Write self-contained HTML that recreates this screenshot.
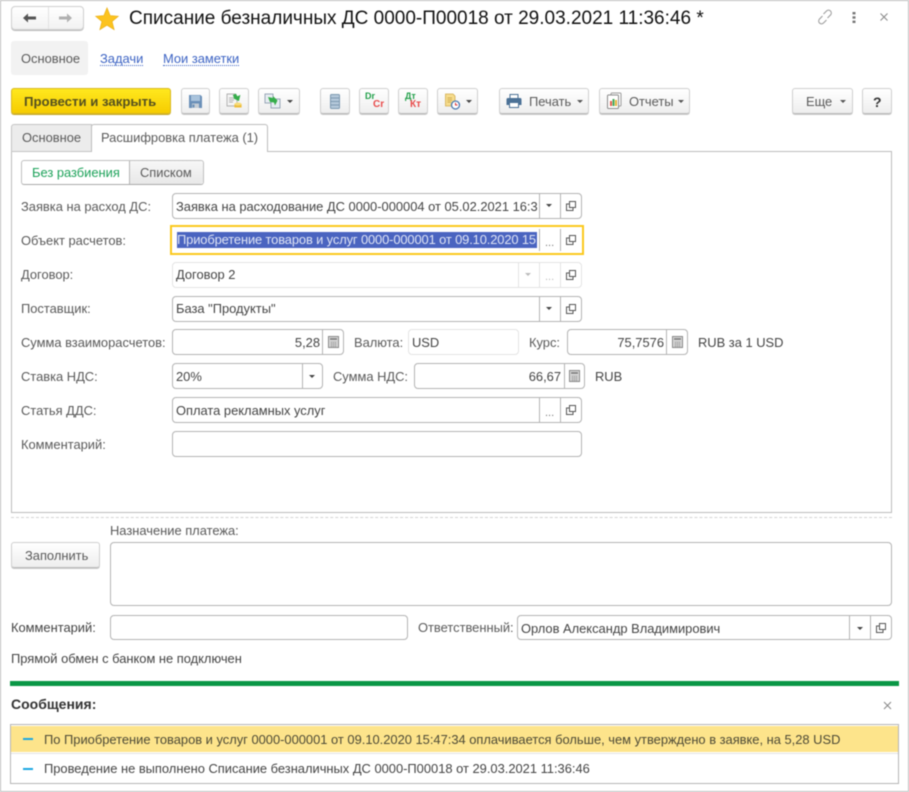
<!DOCTYPE html>
<html lang="ru"><head><meta charset="utf-8"><title>Списание безналичных ДС</title>
<style>
html,body{margin:0;padding:0;background:#fff}
#p{position:relative;width:909px;height:792px;overflow:hidden;background:#fff;font:13px "Liberation Sans",Arial,sans-serif;color:#4a4a4a;filter:blur(.45px)}
#p div,#p svg{position:absolute;box-sizing:border-box}
.t{white-space:nowrap;line-height:16px;height:16px;font-size:12.9px;color:#5a5a5a;transform:translateY(1px)}
.v{white-space:nowrap;line-height:16px;height:16px;font-size:12.9px;color:#444;overflow:hidden;transform:translateY(1px)}
.f{border:1px solid #b3b3b3;border-radius:4px;background:#fff}
.l{border-color:#e4e4e4}
.d{width:1px;background:#b3b3b3}
.b{border:1px solid #cfcfcf;border-bottom-color:#bbb;box-shadow:0 1px 0 #c9c9c9;border-radius:3px;background:linear-gradient(#fff,#eee);top:88px;height:26px}
.c{width:0;height:0;border-left:3px solid transparent;border-right:3px solid transparent;border-top:3px solid #444}
.bt{white-space:nowrap;line-height:16px;height:16px;font-size:12.9px;color:#5a5a5a;top:94px}
</style></head><body><div id="p">
<!-- window frame -->
<div style="left:0;top:0;width:909px;height:792px;border:1px solid #bdbdbd"></div>

<!-- nav -->
<div style="left:11px;top:6px;width:73px;height:24px;border:1px solid #cfcfcf;box-shadow:0 1px 0 #bbb;border-radius:4px;background:linear-gradient(#fff,#f2f2f2)"></div>
<div class="d" style="left:48px;top:7px;height:22px;background:#e2e2e2"></div>
<svg style="left:22px;top:12px" width="16" height="12" viewBox="0 0 16 12"><path d="M1 6L6 1.500V4.500H14V7.500H6V10.500Z" fill="#555"/></svg>
<svg style="left:57px;top:12px" width="16" height="12" viewBox="0 0 16 12"><path d="M15 6L10 1.500V4.500H2V7.500H10V10.500Z" fill="#b0b0b0"/></svg>
<svg style="left:95px;top:7px" width="24" height="24" viewBox="0 0 24 24"><path d="M12 .8L15.200 8.600 23.400 9.200 17.100 14.500 19.200 22.700 12 18.200 4.800 22.700 6.900 14.500.6 9.200 8.800 8.600Z" fill="#fcc31e" stroke="#e9ad12" stroke-width=".6"/></svg>
<div class="v" style="left:129px;top:7px;height:22px;line-height:22px;font-size:19px;color:#111;overflow:visible">Списание безналичных ДС 0000-П00018 от 29.03.2021 11:36:46 *</div>
<svg style="left:816px;top:8px" width="18" height="18" viewBox="0 0 18 18" fill="none" stroke="#999" stroke-width="1"><path d="M7.500 6L10.500 3a2.500 2.500 0 0 1 4 4L11.500 10"/><path d="M10.500 12L7.500 15a2.500 2.500 0 0 1-4-4L6.500 8"/></svg>
<svg style="left:852px;top:11px" width="4" height="13" viewBox="0 0 4 13" fill="#777"><rect x=".5" y="1" width="3" height="2.400"/><rect x=".5" y="5.300" width="3" height="2.400"/><rect x=".5" y="9.600" width="3" height="2.400"/></svg>
<svg style="left:879px;top:12px" width="10" height="10" viewBox="0 0 10 10" stroke="#888" stroke-width="1"><path d="M1.500 1.500L8.500 8.500M8.500 1.500L1.500 8.500"/></svg>

<!-- page tabs -->
<div style="left:11px;top:41px;width:77px;height:34px;background:#f2f2f2;border-radius:3px"></div>
<div class="t" style="left:21px;top:50px">Основное</div>
<div class="t" style="left:100px;top:50px;color:#3d64c4;border-bottom:1px dotted #3d64c4;height:15px">Задачи</div>
<div class="t" style="left:163px;top:50px;color:#3d64c4;border-bottom:1px dotted #3d64c4;height:15px">Мои заметки</div>

<!-- toolbar -->
<div style="left:11px;top:88px;width:160px;height:26px;border:1px solid #d8b820;box-shadow:0 1px 0 #c2a528;border-radius:3px;background:linear-gradient(#ffe81e,#f6cc00)"></div>
<div class="bt" style="left:24px;font-weight:bold;font-size:13.2px;color:#55501f">Провести и закрыть</div>
<div class="b" style="left:181px;width:29px"></div>
<svg style="left:188px;top:94px" width="15" height="15" viewBox="0 0 15 15"><path d="M1 1H12.500L14 2.500V14H1Z" fill="#6b90b8"/><rect x="3" y="1.500" width="9" height="5.500" fill="#a9c3dc"/><rect x="4" y="9.500" width="7" height="4.500" fill="#c5cdd5"/><rect x="4.500" y="10.500" width="2" height="3" fill="#6b90b8"/></svg>
<div class="b" style="left:219px;width:30px"></div>
<svg style="left:226px;top:92px" width="17" height="18" viewBox="0 0 17 18"><path d="M1 2H9L11 4V14H1Z" fill="#f4f4f4" stroke="#999" stroke-width=".7"/><path d="M3 6H8M3 8H8M3 10H7" stroke="#999" stroke-width=".8"/><ellipse cx="12" cy="14" rx="3.600" ry="1.500" fill="#eebd3a"/><rect x="8.400" y="12" width="7.200" height="3.500" fill="#eebd3a"/><ellipse cx="12" cy="12" rx="3.600" ry="1.500" fill="#f7dc79"/><path d="M8 1.500H11.500V4.500H15L11 9.500 7 4.500H8Z" fill="#35ad4a" transform="rotate(-25 11 5)"/></svg>
<div class="b" style="left:258px;width:42px"></div>
<svg style="left:264px;top:93px" width="17" height="16" viewBox="0 0 17 16"><rect x="1" y="1" width="8" height="9" fill="#e8edf2" stroke="#8495a8" stroke-width=".8"/><rect x="7" y="6" width="9" height="9" fill="#e8edf2" stroke="#8495a8" stroke-width=".8"/><path d="M4 4L9 5V3L13.500 7.500 11 12.500 10 9.500 6 9Z" fill="#35ad4a"/></svg>
<div class="c" style="left:287px;top:100px"></div>
<div class="b" style="left:320px;width:30px"></div>
<svg style="left:330px;top:94px" width="10" height="15" viewBox="0 0 10 15"><rect x=".5" y=".5" width="9" height="14" rx="1" fill="#b4c8d9" stroke="#7d99b1"/><path d="M.5 4H9.500M.5 7.500H9.500M.5 11H9.500" stroke="#7d99b1"/></svg>
<div class="b" style="left:359px;width:30px"></div>
<div style="left:365px;top:91px;font:bold 9px/10px 'Liberation Sans',sans-serif;color:#22a04a">Dr</div>
<div style="left:373px;top:100px;font:bold 10px/10px 'Liberation Sans',sans-serif;color:#e84b4b">Cr</div>
<div class="b" style="left:398px;width:30px"></div>
<div style="left:405px;top:91px;font:bold 9px/10px 'Liberation Sans',sans-serif;color:#22a04a">Дт</div>
<div style="left:410px;top:100px;font:bold 10px/10px 'Liberation Sans',sans-serif;color:#e84b4b">Кт</div>
<div class="b" style="left:437px;width:41px"></div>
<svg style="left:444px;top:93px" width="17" height="17" viewBox="0 0 17 17"><path d="M1.500 1H9L11 3V13H1.500Z" fill="#f6dc8d" stroke="#d2ad4f" stroke-width=".8"/><path d="M3.500 5H8M3.500 7H8M3.500 9H7" stroke="#c39a3a" stroke-width=".8"/><circle cx="11.500" cy="12" r="4" fill="#fff" stroke="#4c7ab0" stroke-width="1.300"/><path d="M11.500 9.800V12H13.500" stroke="#d33" stroke-width="1" fill="none"/></svg>
<div class="c" style="left:466px;top:100px"></div>
<div class="b" style="left:499px;width:90px"></div>
<svg style="left:506px;top:94px" width="16" height="14" viewBox="0 0 16 14"><rect x="4" y=".5" width="8" height="4" fill="#fff" stroke="#4b7196"/><path d="M.5 5.500Q.5 4 2 4H14Q15.500 4 15.500 5.500V11H.5Z" fill="#4b7196"/><rect x="3.500" y="8.500" width="9" height="5" fill="#fff" stroke="#4b7196"/></svg>
<div class="bt" style="left:529px">Печать</div>
<div class="c" style="left:577px;top:100px;border-top-color:#555"></div>
<div class="b" style="left:599px;width:91px"></div>
<svg style="left:606px;top:92px" width="17" height="18" viewBox="0 0 17 18"><rect x="5" y="1" width="10" height="13" rx="1" fill="#fff" stroke="#9a9a9a"/><rect x="1.500" y="3" width="11" height="13.500" rx="1" fill="#fff" stroke="#8a8a8a"/><rect x="4" y="9" width="2" height="5" fill="#e25b4b"/><rect x="6.500" y="7" width="2" height="7" fill="#42a85a"/><rect x="9" y="8" width="2" height="6" fill="#e4b43a"/></svg>
<div class="bt" style="left:629px">Отчеты</div>
<div class="c" style="left:678px;top:100px;border-top-color:#555"></div>
<div class="b" style="left:792px;width:61px"></div>
<div class="bt" style="left:806px">Еще</div>
<div class="c" style="left:840px;top:100px;border-top-color:#555"></div>
<div class="b" style="left:862px;width:30px"></div>
<div class="bt" style="left:873px;font-weight:bold;font-size:14px;color:#333">?</div>

<!-- tabs and panel -->
<div style="left:11px;top:151px;width:881px;height:362px;border:1px solid #bcbcbc;background:#fff"></div>
<div style="left:11px;top:124px;width:81px;height:28px;border:1px solid #c4c4c4;background:#ececec;border-radius:3px 0 0 0"></div>
<div class="t" style="left:22px;top:129px">Основное</div>
<div style="left:91px;top:124px;width:177px;height:28px;border:1px solid #bcbcbc;border-bottom:0;background:#fff;border-radius:3px 3px 0 0"></div>
<div class="t" style="left:101px;top:129px">Расшифровка платежа (1)</div>

<div style="left:21px;top:160px;width:183px;height:25px;border:1px solid #c0c0c0;border-bottom-color:#aaa;border-radius:3px;background:#fff"></div>
<div style="left:129px;top:161px;width:74px;height:23px;background:linear-gradient(#f7f7f7,#e8e8e8);border-left:1px solid #b5b5b5;border-radius:0 3px 3px 0"></div>
<div class="t" style="left:32px;top:164px;color:#1da25a">Без разбиения</div>
<div class="t" style="left:140px;top:164px">Списком</div>

<!-- rows -->
<div class="t" style="left:21px;top:198px">Заявка на расход ДС:</div>
<div class="f" style="left:172px;top:193px;width:410px;height:26px"></div>
<div class="d" style="left:539px;top:194px;height:24px"></div><div class="d" style="left:560px;top:194px;height:24px"></div>
<div class="v" style="left:176px;top:198px;width:362px">Заявка на расходование ДС 0000-000004 от 05.02.2021 16:39:11</div>
<div class="c" style="left:546px;top:204px"></div>

<div class="t" style="left:21px;top:232px">Объект расчетов:</div>
<div style="left:170px;top:225px;width:414px;height:30px;border:2px solid #fbc91c;background:#fff"></div>
<div class="d" style="left:539px;top:229px;height:22px"></div><div class="d" style="left:560px;top:229px;height:22px"></div>
<div class="v" style="left:177px;top:231px;width:360px;background:#4a64c0;color:#dfe4f5;letter-spacing:-.12px">Приобретение товаров и услуг 0000-000001 от 09.10.2020 15:47:34</div>
<div class="t" style="left:545px;top:234px;color:#777;font-size:11px">...</div>

<div class="t" style="left:21px;top:266px">Договор:</div>
<div class="f l" style="left:172px;top:262px;width:410px;height:26px"></div>
<div class="d" style="left:518px;top:263px;height:24px;background:#e4e4e4"></div><div class="d" style="left:539px;top:263px;height:24px;background:#e4e4e4"></div><div class="d" style="left:560px;top:263px;height:24px;background:#e4e4e4"></div>
<div class="v" style="left:176px;top:266px">Договор 2</div>
<div class="c" style="left:525px;top:273px;border-top-color:#bbb"></div>
<div class="t" style="left:545px;top:268px;color:#bbb;font-size:11px">...</div>

<div class="t" style="left:21px;top:300px">Поставщик:</div>
<div class="f" style="left:172px;top:296px;width:410px;height:26px"></div>
<div class="d" style="left:539px;top:297px;height:24px"></div><div class="d" style="left:560px;top:297px;height:24px"></div>
<div class="v" style="left:176px;top:300px">База "Продукты"</div>
<div class="c" style="left:546px;top:307px"></div>

<div class="t" style="left:21px;top:334px">Сумма взаиморасчетов:</div>
<div class="f" style="left:172px;top:329px;width:172px;height:26px"></div>
<div class="d" style="left:322px;top:330px;height:24px"></div>
<div class="v" style="right:589px;top:334px">5,28</div>
<div class="t" style="left:354px;top:334px">Валюта:</div>
<div class="f l" style="left:408px;top:329px;width:111px;height:26px"></div>
<div class="v" style="left:412px;top:334px">USD</div>
<div class="t" style="left:529px;top:334px">Курс:</div>
<div class="f" style="left:567px;top:329px;width:121px;height:26px"></div>
<div class="d" style="left:666px;top:330px;height:24px"></div>
<div class="v" style="right:245px;top:334px">75,7576</div>
<div class="v" style="left:698px;top:334px">RUB за 1 USD</div>

<div class="t" style="left:21px;top:368px">Ставка НДС:</div>
<div class="f" style="left:172px;top:363px;width:151px;height:26px"></div>
<div class="d" style="left:302px;top:364px;height:24px"></div>
<div class="v" style="left:176px;top:368px">20%</div>
<div class="c" style="left:309px;top:375px"></div>
<div class="t" style="left:333px;top:368px">Сумма НДС:</div>
<div class="f" style="left:414px;top:363px;width:171px;height:26px"></div>
<div class="d" style="left:564px;top:364px;height:24px"></div>
<div class="v" style="right:348px;top:368px">66,67</div>
<div class="v" style="left:595px;top:368px">RUB</div>

<div class="t" style="left:21px;top:402px">Статья ДДС:</div>
<div class="f" style="left:172px;top:397px;width:410px;height:26px"></div>
<div class="d" style="left:539px;top:398px;height:24px"></div><div class="d" style="left:560px;top:398px;height:24px"></div>
<div class="v" style="left:176px;top:402px">Оплата рекламных услуг</div>
<div class="t" style="left:545px;top:404px;color:#777;font-size:11px">...</div>

<div class="t" style="left:21px;top:436px">Комментарий:</div>
<div class="f" style="left:172px;top:431px;width:410px;height:26px"></div>

<!-- open icons -->
<svg style="left:566px;top:201px" width="10" height="10" viewBox="0 0 10 10" fill="none" stroke="#555"><rect x="3.500" y=".5" width="6" height="6" fill="#fff"/><path d="M3.500 3H.5V9.500H7V6.500"/></svg>
<svg style="left:566px;top:235px" width="10" height="10" viewBox="0 0 10 10" fill="none" stroke="#555"><rect x="3.500" y=".5" width="6" height="6" fill="#fff"/><path d="M3.500 3H.5V9.500H7V6.500"/></svg>
<svg style="left:566px;top:270px" width="10" height="10" viewBox="0 0 10 10" fill="none" stroke="#555"><rect x="3.500" y=".5" width="6" height="6" fill="#fff"/><path d="M3.500 3H.5V9.500H7V6.500"/></svg>
<svg style="left:566px;top:304px" width="10" height="10" viewBox="0 0 10 10" fill="none" stroke="#555"><rect x="3.500" y=".5" width="6" height="6" fill="#fff"/><path d="M3.500 3H.5V9.500H7V6.500"/></svg>
<svg style="left:566px;top:405px" width="10" height="10" viewBox="0 0 10 10" fill="none" stroke="#555"><rect x="3.500" y=".5" width="6" height="6" fill="#fff"/><path d="M3.500 3H.5V9.500H7V6.500"/></svg>
<!-- calc icons -->
<svg style="left:328px;top:336px" width="11" height="12" viewBox="0 0 11 12"><rect x=".5" y=".5" width="10" height="11" fill="#ddd" stroke="#888"/><rect x="2" y="2" width="7" height="2" fill="#888"/><path d="M2 6H9M2 8H9M2 10H9M3.500 5.500V11M5.500 5.500V11M7.500 5.500V11" stroke="#999" stroke-width=".6"/></svg>
<svg style="left:672px;top:336px" width="11" height="12" viewBox="0 0 11 12"><rect x=".5" y=".5" width="10" height="11" fill="#ddd" stroke="#888"/><rect x="2" y="2" width="7" height="2" fill="#888"/><path d="M2 6H9M2 8H9M2 10H9M3.500 5.500V11M5.500 5.500V11M7.500 5.500V11" stroke="#999" stroke-width=".6"/></svg>
<svg style="left:569px;top:370px" width="11" height="12" viewBox="0 0 11 12"><rect x=".5" y=".5" width="10" height="11" fill="#ddd" stroke="#888"/><rect x="2" y="2" width="7" height="2" fill="#888"/><path d="M2 6H9M2 8H9M2 10H9M3.500 5.500V11M5.500 5.500V11M7.500 5.500V11" stroke="#999" stroke-width=".6"/></svg>

<!-- bottom form -->
<div style="left:11px;top:517px;width:881px;height:1px;border-top:1px dashed #d4d4d4"></div>
<div class="t" style="left:110px;top:522px">Назначение платежа:</div>
<div class="b" style="left:11px;top:542px;width:89px;height:26px"></div>
<div class="t" style="left:25px;top:547px">Заполнить</div>
<div class="f" style="left:110px;top:542px;width:782px;height:64px"></div>
<div class="t" style="left:11px;top:619px;color:#444">Комментарий:</div>
<div class="f" style="left:110px;top:615px;width:298px;height:25px"></div>
<div class="t" style="left:418px;top:619px">Ответственный:</div>
<div class="f" style="left:517px;top:615px;width:375px;height:25px"></div>
<div class="d" style="left:849px;top:616px;height:23px"></div><div class="d" style="left:870px;top:616px;height:23px"></div>
<div class="v" style="left:521px;top:620px">Орлов Александр Владимирович</div>
<div class="c" style="left:857px;top:627px"></div>
<svg style="left:876px;top:623px" width="10" height="10" viewBox="0 0 10 10" fill="none" stroke="#555"><rect x="3.500" y=".5" width="6" height="6" fill="#fff"/><path d="M3.500 3H.5V9.500H7V6.500"/></svg>
<div class="t" style="left:11px;top:650px;color:#444">Прямой обмен с банком не подключен</div>

<!-- messages -->
<div style="left:10px;top:681px;width:889px;height:5px;background:#0a9746"></div>
<div class="t" style="left:11px;top:695px;font-weight:bold;font-size:14px;color:#333">Сообщения:</div>
<svg style="left:883px;top:701px" width="9" height="9" viewBox="0 0 9 9" stroke="#888" stroke-width="1"><path d="M1 1L8 8M8 1L1 8"/></svg>
<div style="left:10px;top:724px;width:889px;height:60px;border:1px solid #b5b5b5;background:#fff"></div>
<div style="left:11px;top:726px;width:887px;height:26px;background:#fde48b"></div>
<div style="left:11px;top:753px;width:887px;height:1px;background:#e4e4e4"></div>
<div style="left:23px;top:738px;width:10px;height:2px;background:#1ba7e2"></div>
<div style="left:23px;top:768px;width:10px;height:2px;background:#1ba7e2"></div>
<div class="v" style="left:44px;top:731px;color:#4d4a36">По Приобретение товаров и услуг 0000-000001 от 09.10.2020 15:47:34 оплачивается больше, чем утверждено в заявке, на 5,28 USD</div>
<div class="v" style="left:44px;top:760px">Проведение не выполнено Списание безналичных ДС 0000-П00018 от 29.03.2021 11:36:46</div>
</div></body></html>
